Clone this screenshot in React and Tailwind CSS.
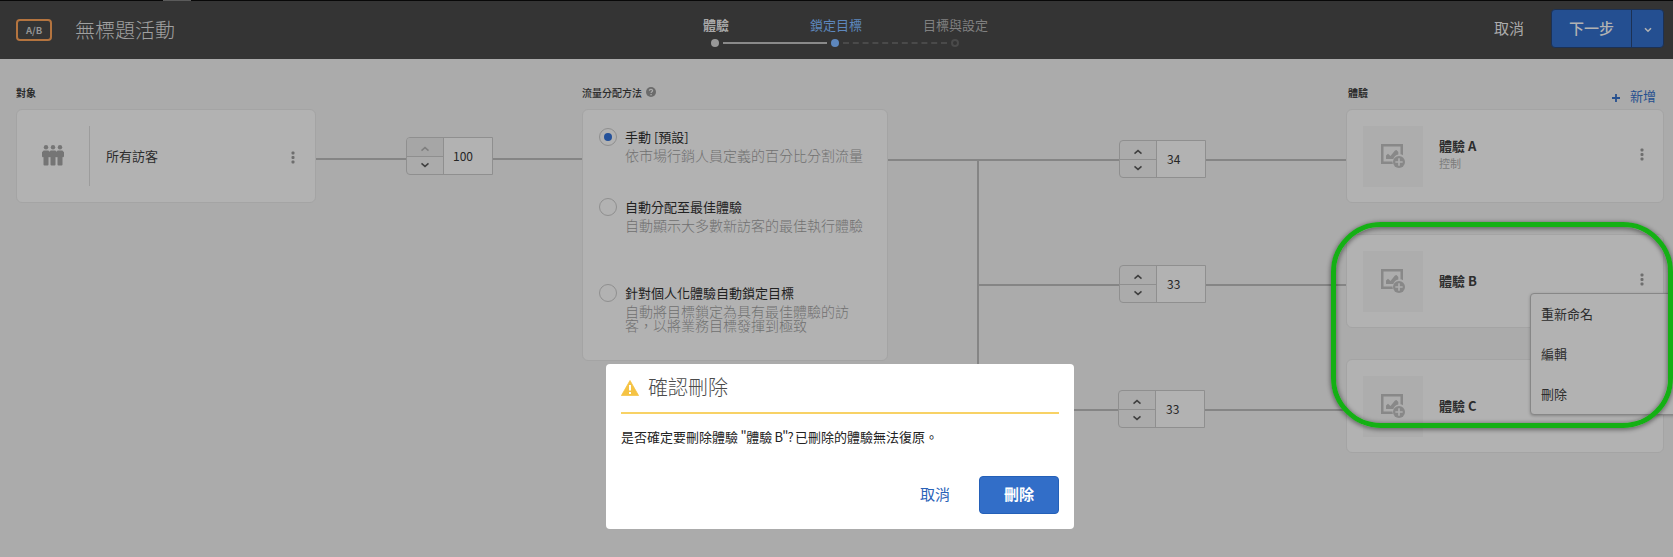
import React from "react";

const Chevron = ({ up, color = "#3f3f3f" }) => (
  <svg width="10" height="6" viewBox="0 0 10 6" fill="none" stroke={color} strokeWidth="1.5">
    <path d={up ? "M1.5 4.6 5 1.6 8.5 4.6" : "M1.5 1.4 5 4.4 8.5 1.4"} />
  </svg>
);

const Dots = () => (
  <svg width="4" height="13" viewBox="0 0 4 13" fill="#6e6e6e">
    <rect x="0.5" y="0.5" width="3" height="3" rx="1" />
    <rect x="0.5" y="5" width="3" height="3" rx="1" />
    <rect x="0.5" y="9.5" width="3" height="3" rx="1" />
  </svg>
);

const People = () => (
  <svg width="22" height="21" viewBox="0 0 22 21" fill="#757575">
    {[4, 11, 18].map((x) => (
      <g key={x} transform={`translate(${x} 0)`}>
        <circle cx="0" cy="2.300" r="2.200" />
        <path d="M-2.400 5.400H2.400L4 7.200V11a1.200 1.200 0 0 1-1.500 1.100V19.600a1 1 0 0 1-1 1H-1.500a1 1 0 0 1-1-1V12.100A1.200 1.200 0 0 1-4 11V7.200z" />
      </g>
    ))}
  </svg>
);

const ImageAdd = () => (
  <svg width="24" height="24" viewBox="0 0 24 24">
    <path
      fill="#888888"
      fillRule="evenodd"
      d="M0 0h22v11.200a7 7 0 0 0-2.500-.9V2.500h-17v15h9a7 7 0 0 0 .4 2.500H0z"
    />
    <path fill="#888888" d="M5 15v-3.500l2-1.800 2.500 2.300L14 6.500l1.500-.5 1.800 2v2.600a7 7 0 0 0-5 4.400z" />
    <circle cx="18" cy="18" r="6" fill="#888888" />
    <path d="M18 14.300v7.400M14.300 18h7.400" stroke="#adadad" strokeWidth="1.700" />
  </svg>
);

const Stepper = ({ value, upDisabled, className = "" }) => (
  <div className={`flex h-[38px] w-[87px] shrink-0 rounded-l-[4px] border border-[#8f8f8f] ${className}`}>
    <div className="flex w-[37px] shrink-0 flex-col border-r border-[#8f8f8f]">
      <div
        className={`flex h-[19px] items-center justify-center border-b border-[#8f8f8f] pt-[3px] ${
          upDisabled ? "rounded-tl-[3px] bg-[#a6a6a6]" : ""
        }`}
      >
        <Chevron up color={upDisabled ? "#7f7f7f" : "#3f3f3f"} />
      </div>
      <div className="flex flex-1 items-center justify-center pb-px">
        <Chevron />
      </div>
    </div>
    <div
      className={`flex flex-1 items-center bg-[#b2b2b2] text-[12px] text-[#262626] ${
        upDisabled ? "pb-px pl-[9px]" : "pl-[10px]"
      }`}
    >
      {value}
    </div>
  </div>
);

const Line = ({ className = "" }) => <div className={`h-[2px] bg-[#858585] ${className}`} />;

const methods = [
  { title: "手動 [預設]", lines: ["依市場行銷人員定義的百分比分割流量"], h: "h-[70px]", on: true },
  { title: "自動分配至最佳體驗", lines: ["自動顯示大多數新訪客的最佳執行體驗"], h: "h-[86px]" },
  {
    title: "針對個人化體驗自動鎖定目標",
    lines: ["自動將目標鎖定為具有最佳體驗的訪", "客，以將業務目標發揮到極致"],
    h: "h-[60px]",
  },
];

const Experience = ({ name, note }) => (
  <div className="flex h-[94px] rounded-[6px] border border-[#a4a4a4] bg-[#b2b2b2] pl-4 pt-4">
    <div className="flex h-[61px] w-[60px] items-center justify-center bg-[#adadad] pb-px">
      <ImageAdd />
    </div>
    <div className={`ml-4 flex-1 ${note ? "mt-[10px]" : "mt-[20px]"}`}>
      <div className="text-[13px] font-bold leading-[20px] text-[#2d2d2d]">{name}</div>
      {note && <div className="text-[11px] leading-[15px] text-[#7c7c7c]">{note}</div>}
    </div>
    <div className="mr-[19px] mt-[22px]">
      <Dots />
    </div>
  </div>
);

export default function App() {
  return (
    <div
      lang="zh-TW"
      className="relative h-[557px] w-[1673px] overflow-hidden bg-[#ababab] font-['Noto_Sans_CJK_TC',sans-serif] text-[13px]"
    >
      <div className="flex h-px bg-[#080808] pl-[163px]">
        <div className="h-px w-7 bg-[#5a5a5a]" />
      </div>
      <header className="flex h-[58px] bg-[#343434]">
        <div className="flex w-[687px] items-start pl-4">
          <div className="mt-[18px] flex h-[22px] w-9 items-center justify-center rounded-[4px] border-2 border-[#b4743f] text-[9.5px] font-bold text-[#959595]">
            A/B
          </div>
          <h1 className="ml-[23px] mt-[14px] text-[20px] font-light leading-[30px] text-[#a0a0a0]">無標題活動</h1>
        </div>
        <div className="flex w-[336px] flex-col">
          <div className="mt-[14px] flex pl-px leading-[20px]">
            <div className="w-[56px] text-center font-bold text-[#a8a8a8]">體驗</div>
            <div className="w-[184px] text-center text-[#5d87bd]">鎖定目標</div>
            <div className="-ml-[5px] w-[64px] text-center text-[#808080]">
              <span className="whitespace-nowrap">目標與設定</span>
            </div>
          </div>
          <div className="mt-[4px] flex items-center pl-6">
            <div className="size-2 rounded-full bg-[#989898]" />
            <div className="ml-1 h-[2px] w-[104px] bg-[#8a8a8a]" />
            <div className="ml-1 size-2 rounded-full bg-[#5d87bd]" />
            <div className="ml-1 h-0 w-[104px] border-t-2 border-dashed border-[#4a4a4a]" />
            <div className="ml-1 size-2 rounded-full border-2 border-[#4a4a4a]" />
          </div>
        </div>
        <div className="flex flex-1 items-start justify-end pr-[9px]">
          <div className="mr-[27px] mt-[16px] text-[15px] leading-[22px] text-[#acacac]">取消</div>
          <div className="mt-2 flex h-[39px] w-[113px] rounded-[4px] border border-[#1c3154] bg-[#244f91] text-[15px] text-[#b2b2b2]">
            <div className="flex w-[80px] items-center justify-center border-r border-[#1c3154] pb-px font-medium">下一步</div>
            <div className="flex flex-1 items-center justify-center pt-[2px]">
              <svg width="8" height="6" viewBox="0 0 8 6" fill="none" stroke="#b2b2b2" strokeWidth="1.600">
                <path d="M1 1.200 4 4.200 7 1.200" />
              </svg>
            </div>
          </div>
        </div>
      </header>

      <main className="flex px-4 pt-[25px]">
        <section className="w-[300px] shrink-0">
          <div className="h-[25px] text-[10px] font-bold leading-[17px] text-[#2b2b2b]">對象</div>
          <div className="flex h-[94px] items-start rounded-[6px] border border-[#a4a4a4] bg-[#b2b2b2]">
            <div className="mt-[35px] ml-[25px]">
              <People />
            </div>
            <div className="ml-[25px] mt-4 h-[60px] w-px bg-[#9c9c9c]" />
            <div className="ml-[16px] mt-[36px] flex-1 leading-[20px] text-[#2d2d2d]">所有訪客</div>
            <div className="mr-[20px] mt-[41px]">
              <Dots />
            </div>
          </div>
        </section>

        <div className="flex w-[266px] shrink-0 items-start">
          <Line className="mt-[74px] w-[90px]" />
          <Stepper value="100" upDisabled className="mt-[53px]" />
          <Line className="mt-[74px] flex-1" />
        </div>

        <section className="w-[306px] shrink-0">
          <div className="flex h-[25px] items-start text-[10px] font-medium leading-[17px] text-[#2b2b2b]">
            流量分配方法
            <svg className="ml-1 mt-[3px]" width="10" height="10" viewBox="0 0 10 10">
              <circle cx="5" cy="5" r="5" fill="#6b6b6b" />
              <path d="M3.300 3.800C3.400 1.700 6.700 1.900 6.600 3.800 6.500 4.800 5.100 4.800 5.100 6" fill="none" stroke="#ababab" strokeWidth="1.200" />
              <rect x="4.400" y="7" width="1.300" height="1.300" fill="#ababab" />
            </svg>
          </div>
          <div className="h-[252px] rounded-[6px] border border-[#a4a4a4] bg-[#b2b2b2] pl-4 pt-[18px]">
            {methods.map((m) => (
              <div key={m.title} className={`flex ${m.h}`}>
                <div className="flex size-[18px] shrink-0 items-center justify-center rounded-full border border-[#8f8f8f]">
                  {m.on && <div className="size-2 rounded-full bg-[#24519a]" />}
                </div>
                <div className="-mt-px ml-2">
                  <div className="leading-[20px] text-[#222222]">{m.title}</div>
                  <p className="mt-px whitespace-pre text-[14px] font-light leading-[14px] text-[#707070]">
                    {m.lines.join("\n")}
                  </p>
                </div>
              </div>
            ))}
          </div>
        </section>

        <div className="flex w-[458px] shrink-0 items-start">
          <Line className="mt-[75px] w-[89px]" />
          <div className="mt-[75px] h-[252px] w-[2px] bg-[#858585]" />
          <div className="flex flex-1 flex-col gap-[87px] pt-[56px]">
            <div className="flex">
              <Line className="mt-[19px] w-[140px]" />
              <Stepper value="34" />
              <Line className="mt-[19px] flex-1" />
            </div>
            <div className="flex">
              <Line className="mt-[19px] w-[140px]" />
              <Stepper value="33" />
              <Line className="mt-[19px] flex-1" />
            </div>
            <div className="flex">
              <Line className="mt-[19px] w-[139px]" />
              <Stepper value="33" />
              <Line className="mt-[19px] flex-1" />
            </div>
          </div>
        </div>

        <section className="w-[318px] shrink-0">
          <div className="flex h-[25px] items-start justify-between pl-[2px] pr-[8px]">
            <span className="text-[10px] font-bold leading-[17px] text-[#2b2b2b]">體驗</span>
            <span className="mt-[2px] flex items-center leading-[20px] text-[#26508f]">
              <svg className="mr-[10px] mt-[3px]" width="8" height="8" viewBox="0 0 8 8">
                <path d="M4 0v8M0 4h8" stroke="#26508f" strokeWidth="1.800" />
              </svg>
              新增
            </span>
          </div>
          <div className="flex flex-col gap-[31px]">
            <Experience name="體驗 A" note="控制" />
            <Experience name="體驗 B" />
            <Experience name="體驗 C" />
          </div>
        </section>
      </main>

      <div className="absolute left-[1530px] top-[293px] h-[122px] w-[160px] rounded-[4px] border border-[#878787] bg-[#b2b2b2] pl-[10px] text-[#2d2d2d] shadow-[0_1px_3px_rgba(0,0,0,0.25)]">
        <div className="leading-[40px]">重新命名</div>
        <div className="leading-[40px]">編輯</div>
        <div className="leading-[40px]">刪除</div>
      </div>

      <div className="absolute left-[606px] top-[364px] h-[165px] w-[468px] rounded-[4px] bg-white px-[15px]">
        <div className="flex h-[50px] items-start border-b-2 border-[#f8d265]">
          <svg className="mt-4" width="18" height="16" viewBox="0 0 18 16">
            <path d="M9 .5 17.600 15.600H.4z" fill="#f5c344" stroke="#f5c344" strokeWidth=".8" strokeLinejoin="round" />
            <path d="M9 5v5.500M9 12v2" stroke="#fff" strokeWidth="2" />
          </svg>
          <h2 className="ml-[9px] mt-[8px] text-[20px] font-light leading-[30px] text-[#4b4b4b]">確認刪除</h2>
        </div>
        <p className="mt-[13px] leading-[20px] text-[#222222]">
          是否確定要刪除體驗<span className="tracking-[-0.4px]"> "</span>體驗
          <span className="tracking-[-0.8px]"> B"? </span>已刪除的體驗無法復原。
        </p>
        <div className="mt-[29px] flex items-center justify-end text-[15px]">
          <span className="mr-[29px] pb-[2px] text-[#2a62b8]">取消</span>
          <span className="flex h-[38px] w-[80px] items-center justify-center rounded-[4px] border border-[#2460b8] bg-[#326ec8] pb-[2px] font-bold text-white">
            刪除
          </span>
        </div>
      </div>

      <div className="absolute left-[1331px] top-[222px] h-[206px] w-[342px] rounded-[50px] border-[5px] border-[#14b014] shadow-[0_1px_4px_1px_rgba(0,0,0,0.4),inset_0_1px_4px_1px_rgba(0,0,0,0.4)]" />
    </div>
  );
}
